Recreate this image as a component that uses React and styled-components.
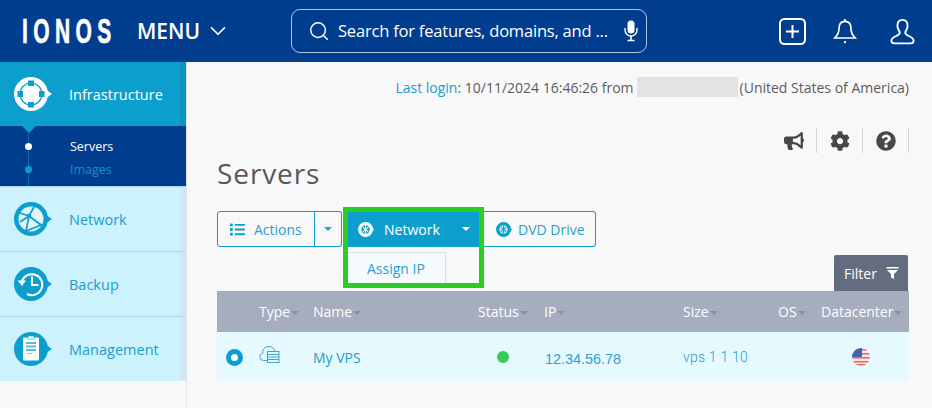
import React from "react";
import styled, { createGlobalStyle } from "styled-components";
import { FaBullhorn, FaCog, FaQuestionCircle, FaList } from "react-icons/fa";
import { Search, ChevronDown } from "lucide-react";

const blue = "#0c9fce";
const navy = "#003d8f";

const Global = createGlobalStyle`
  html, body { margin: 0; padding: 0; background: #f8f8f8; }
  body { font-family: "Open Sans", "Liberation Sans", sans-serif; overflow: hidden; }
  * { box-sizing: border-box; }
`;

const Page = styled.div`
  width: 932px;
  height: 408px;
  overflow: hidden;
  display: flex;
  flex-direction: column;
`;

const Header = styled.header`
  height: 62px;
  flex: none;
  background: ${navy};
  color: #fff;
  display: flex;
  align-items: center;
  padding: 0 17px 0 22px;
`;

const LogoBox = styled.div`
  width: 90px;
  flex: none;
  height: 36px;
`;

const LogoText = styled.span`
  display: inline-block;
  font-family: "Liberation Sans", sans-serif;
  font-weight: 700;
  font-size: 35px;
  line-height: 36px;
  letter-spacing: 9px;
  -webkit-text-stroke: 0.7px #fff;
  transform: scaleX(0.6);
  transform-origin: left center;
  white-space: nowrap;
`;

const MenuLabel = styled.div`
  flex: none;
  display: flex;
  align-items: center;
  gap: 5px;
  margin-left: 25px;
  width: 154px;
  font-size: 21px;
  font-weight: 600;
`;

const SearchBox = styled.div`
  flex: none;
  width: 356px;
  height: 44px;
  margin-top: -1px;
  border: 1px solid rgba(255, 255, 255, 0.7);
  border-radius: 9px;
  display: flex;
  align-items: center;
  padding: 0 8px 0 16px;
  font-size: 16.5px;
  letter-spacing: -0.2px;
`;

const SearchText = styled.span`
  flex: 1;
  margin-left: 8px;
  white-space: nowrap;
`;

const HeaderIcons = styled.div`
  margin-left: auto;
  display: flex;
  align-items: center;
  gap: 27px;
`;

const Body = styled.div`
  flex: 1;
  display: flex;
  min-height: 0;
`;

const Sidebar = styled.nav`
  width: 187px;
  flex: none;
  border-right: 1px solid #dfe5ee;
`;

const NavItem = styled.div`
  height: ${(p) => (p.$active ? 64 : 65)}px;
  display: flex;
  align-items: center;
  gap: 16px;
  padding-left: 14px;
  font-size: 14.5px;
  color: ${(p) => (p.$active ? "#fff" : "#1b9dce")};
  background: ${(p) => (p.$active ? blue : "#ccf3fd")};
  border-right: 6px solid ${(p) => (p.$active ? "#0a93c5" : "#cfe8f6")};
  border-bottom: ${(p) => (p.$active ? "none" : "1px solid #a9d5ea")};
  &:last-child {
    border-bottom: none;
    height: 64px;
  }
`;

const SubNav = styled.div`
  height: 61px;
  background: ${navy};
  position: relative;
  padding: 10px 0 0 70px;
  border-bottom: 1px solid #a9d5ea;
  &::before {
    content: "";
    position: absolute;
    left: 28px;
    top: 0;
    bottom: 0;
    width: 1px;
    background: #0a6ea8;
  }
  &::after {
    content: "";
    position: absolute;
    left: 22px;
    top: 0;
    border: 7px solid transparent;
    border-top-color: ${blue};
    border-bottom: none;
  }
`;

const SubItem = styled.div`
  height: 23px;
  line-height: 21px;
  font-size: 12.5px;
  color: ${(p) => (p.$active ? "#fff" : "#1590cc")};
  position: relative;
  &::before {
    content: "";
    position: absolute;
    left: -45px;
    top: 7px;
    width: 7px;
    height: 7px;
    border-radius: 50%;
    background: ${(p) => (p.$active ? "#fff" : blue)};
  }
`;

const Main = styled.main`
  flex: 1;
  padding: 14px 23px 0 30px;
  color: #555;
`;

const LoginLine = styled.div`
  display: flex;
  justify-content: flex-end;
  align-items: center;
  height: 22px;
  font-size: 14px;
  color: #5c5c5c;
  white-space: pre;
`;

const TextLink = styled.span`
  color: #1b9dce;
`;

const Redacted = styled.span`
  width: 101px;
  height: 20px;
  margin: 0 2px 0 3px;
  background: #e3e3e3;
`;

const ToolIcons = styled.div`
  display: flex;
  justify-content: flex-end;
  margin-top: 30px;
  height: 25px;
`;

const ToolIcon = styled.div`
  width: 46px;
  height: 25px;
  display: flex;
  align-items: center;
  justify-content: center;
  border-right: 1px solid #cfd6e2;
  color: #474747;
  font-size: 20px;
`;

const Title = styled.h1`
  margin: 2px 0 20px;
  font-size: 28px;
  line-height: 36px;
  font-weight: 400;
  letter-spacing: 0.9px;
  color: #585858;
`;

const ButtonRow = styled.div`
  display: flex;
  height: 36px;
`;

const OutlineButton = styled.div`
  height: 36px;
  display: flex;
  align-items: center;
  width: ${(p) => p.$width}px;
  gap: ${(p) => p.$gap || 9}px;
  border: 1px solid ${blue};
  border-radius: ${(p) => p.$radius || "3px"};
  border-left-width: ${(p) => (p.$noLeft ? 0 : 1)}px;
  padding-left: ${(p) => p.$pad || 12}px;
  color: #2a9fd0;
  font-size: 14px;
`;

const Caret = styled.span`
  display: inline-block;
  vertical-align: middle;
  width: 0;
  height: 0;
  border: 4px solid transparent;
  border-top: 4px solid ${(p) => p.$color || "#2a9fd0"};
  border-bottom: none;
  margin-left: ${(p) => p.$left || 0}px;
`;

const NetworkGroup = styled.div`
  position: relative;
  margin-left: 6px;
  width: 131px;
`;

const NetworkButton = styled.div`
  height: 36px;
  display: flex;
  align-items: center;
  padding: 0 9px 0 10px;
  background: ${blue};
  color: #fff;
  font-size: 14px;
  font-weight: 500;
`;

const NetworkLabel = styled.span`
  margin-left: 10px;
  flex: 1;
`;

const Dropdown = styled.div`
  position: absolute;
  left: 0;
  top: 41px;
  width: 98px;
  height: 33px;
  background: #f4f9fc;
  border: 1px solid #d5e1ea;
  border-left: none;
  color: #2a9fd0;
  font-size: 14px;
  line-height: 31px;
  padding-left: 19px;
`;

const Highlight = styled.div`
  position: absolute;
  left: -5px;
  top: -4px;
  width: 141px;
  height: 81px;
  border: 5px solid #2bcc26;
  pointer-events: none;
`;

const FilterRow = styled.div`
  display: flex;
  justify-content: flex-end;
  margin-top: 8px;
  padding-right: 1px;
`;

const FilterButton = styled.div`
  width: 74px;
  height: 36px;
  background: #646c80;
  color: #fff;
  border-radius: 2px 2px 0 0;
  font-size: 14px;
  display: flex;
  align-items: center;
  gap: 9px;
  padding-left: 10px;
`;

const Table = styled.table`
  width: 692px;
  table-layout: fixed;
  border-collapse: collapse;
  th {
    height: 41px;
    background: #a5adbe;
    color: #fff;
    font-weight: 400;
    font-size: 14px;
    text-align: left;
    padding: 0;
    white-space: nowrap;
  }
  td {
    height: 49px;
    background: #e5f9fe;
    color: #1b9dce;
    font-size: 14px;
    padding: 1px 0 0;
  }
`;

const NumberCell = styled.td`
  && {
    font-family: "Liberation Sans", sans-serif;
    font-size: 14.4px;
    color: #2ba3d4;
    padding-top: 4px;
    padding-left: 1px;
  }
`;

const SizeCell = styled.td`
  && {
    font-family: "Roboto", sans-serif;
    font-weight: 300;
    color: #1b9dce;
    letter-spacing: 0.2px;
  }
`;

const Radio = styled.div`
  width: 17px;
  height: 17px;
  margin-left: 9px;
  border-radius: 50%;
  border: 5px solid ${blue};
  background: #fff;
`;

const StatusDot = styled.div`
  width: 12px;
  height: 12px;
  margin-left: 19px;
  border-radius: 50%;
  background: #33cc55;
`;

const FlagWrap = styled.div`
  width: 18px;
  height: 18px;
  margin-left: 31px;
`;

const UserSlot = styled.div`
  display: flex;
  margin-left: 6px;
`;

const Bubble = ({ color = "currentColor", children }) => (
  <svg width="39" height="34" viewBox="0 0 39 34" style={{ flex: "none" }}>
    <circle cx="17" cy="17" r="17" fill={color} />
    <path d="M33 13.5 L38 17 L33 20.5Z" fill={color} />
    {children}
  </svg>
);

const InfraIcon = () => (
  <Bubble color="#fff">
    <circle cx="17" cy="17" r="11" fill="none" stroke={blue} strokeWidth="1.2" />
    <rect x="14" y="3.5" width="6" height="5.5" fill={blue} />
    <rect x="14" y="25" width="6" height="5.5" fill={blue} />
    <rect x="3.5" y="14" width="5.5" height="6" fill={blue} />
    <rect x="25" y="14" width="5.5" height="6" fill={blue} />
  </Bubble>
);

const NetworkIcon = () => (
  <Bubble color={blue}>
    <circle cx="17" cy="17" r="12.5" fill="#dff5fb" />
    <path
      d="M15 14 L6 11 M15 14 L12 29 M15 14 L27 23 M15 14 L20 5 M27 23 L12 29 M6 20 L15 14"
      fill="none"
      stroke={blue}
      strokeWidth="1.7"
    />
    <circle cx="15" cy="14" r="2.2" fill={blue} />
    <circle cx="27" cy="23" r="1.6" fill={blue} />
  </Bubble>
);

const BackupIcon = () => (
  <Bubble color={blue}>
    <path d="M8 14 A10.5 10.5 0 1 1 13 27" fill="none" stroke="#fff" strokeWidth="2" />
    <path d="M3.5 13.5 L12 13.5 L8 19Z" fill="#fff" />
    <path d="M18 9.5 V18 H24.5" fill="none" stroke="#fff" strokeWidth="2" />
  </Bubble>
);

const ManageIcon = () => (
  <Bubble color={blue}>
    <rect x="9" y="5.5" width="16" height="23" rx="1" fill="#fff" />
    <rect x="14" y="4" width="6" height="3" fill="#fff" stroke={blue} strokeWidth="0.6" />
    <path d="M12 11 H22 M12 14.5 H22 M12 18 H22" stroke="#5bb9dc" strokeWidth="1.8" />
    <path d="M12 21.5 H18" stroke="#8ccfe6" strokeWidth="1.2" />
  </Bubble>
);

const SmallDisc = ({ fg, bg }) => (
  <svg width="16" height="15" viewBox="0 0 36 34" style={{ flex: "none" }}>
    <circle cx="17" cy="17" r="17" fill={bg} />
    <path d="M33 13 L36 17 L33 21Z" fill={bg} />
    <circle cx="17" cy="17" r="9.5" fill={fg} />
    <path d="M11 12 L23 22 M23 12 L11 22 M17 8 V26" stroke={bg} strokeWidth="2.4" fill="none" />
  </svg>
);

const MicIcon = () => (
  <svg width="14" height="22" viewBox="0 0 14 22">
    <rect x="3.5" y="0.5" width="7" height="13" rx="3.5" fill="#fff" />
    <path d="M1 8 V10 A6 6 0 0 0 13 10 V8" fill="none" stroke="#fff" strokeWidth="1.4" />
    <path d="M7 16 V20 M3.5 20.5 H10.5" stroke="#fff" strokeWidth="1.6" />
  </svg>
);

const PlusIcon = () => (
  <svg width="27" height="27" viewBox="0 0 27 27" fill="none" stroke="#fff" strokeWidth="2">
    <rect x="1" y="1" width="25" height="25" rx="4.5" />
    <path d="M13.5 7 V20 M7 13.5 H20" />
  </svg>
);

const UserIcon = () => (
  <svg width="25" height="27" viewBox="0 0 27 28" fill="none" stroke="#fff" strokeWidth="2">
    <path d="M13.5 1.5 C9.5 1.5 8 4.5 8 8 C8 11 9.5 13 10.5 14.5 C11 16 10 17 7.5 18.5 C4 20 1.5 21 1.5 24 C1.5 26 3 26.8 5 26.8 H22 C24 26.8 25.5 26 25.5 24 C25.5 21 23 20 19.5 18.5 C17 17 16 16 16.5 14.5 C17.5 13 19 11 19 8 C19 4.5 17.5 1.5 13.5 1.5Z" />
  </svg>
);

const BellIcon = () => (
  <svg width="24" height="27" viewBox="0 0 26 28" fill="none" stroke="#fff" strokeWidth="1.8">
    <path d="M13 3 C8 3 6.5 7 6.5 11 C6.5 16 5 18 2 21 H24 C21 18 19.5 16 19.5 11 C19.5 7 18 3 13 3Z" />
    <path d="M13 0.5 V3" />
    <circle cx="13" cy="25.5" r="1.3" fill="#fff" stroke="none" />
  </svg>
);

const TypeIcon = () => (
  <svg width="21" height="18" viewBox="0 0 21 18" fill="none" stroke="#3aa6d4" strokeWidth="1">
    <path d="M8 14.5 H4.5 A3.8 3.8 0 0 1 3.8 7 A6 6 0 0 1 15 3.5 L16 5" />
    <rect x="8.5" y="5.5" width="11.5" height="11" fill="#e5f9fe" />
    <path d="M8.5 8.5 H20 M8.5 11 H20 M8.5 13.5 H20" />
  </svg>
);

const FunnelIcon = () => (
  <svg width="13" height="12" viewBox="0 0 13 12">
    <path d="M0.5 0 H12.5 V1.5 H0.5Z M1 3 H12 L8 7 V12 L5 10.5 V7Z" fill="#fff" />
  </svg>
);

const FlagIcon = () => (
  <svg width="18" height="18" viewBox="0 0 18 18">
    <defs>
      <clipPath id="flagClip">
        <circle cx="9" cy="9" r="9" />
      </clipPath>
    </defs>
    <g clipPath="url(#flagClip)">
      <rect width="18" height="18" fill="#f6eaea" />
      {[1, 5, 9, 13, 16].map((y) => (
        <rect key={y} x="0" y={y} width="18" height="1.6" fill="#ea6a63" />
      ))}
      <rect width="10" height="9" fill="#3f65ad" />
    </g>
  </svg>
);

const columns = [
  { label: "", width: 42 },
  { label: "Type", width: 54 },
  { label: "Name", width: 165 },
  { label: "Status", width: 66 },
  { label: "IP", width: 139 },
  { label: "Size", width: 95 },
  { label: "OS", width: 43 },
  { label: "Datacenter", width: 88 },
];

const App = () => {
  return (
    <Page>
      <Global />
      <Header>
        <LogoBox>
          <LogoText>IONOS</LogoText>
        </LogoBox>
        <MenuLabel>
          MENU <ChevronDown size={26} strokeWidth={1.6} />
        </MenuLabel>
        <SearchBox>
          <Search size={22} strokeWidth={1.6} />
          <SearchText>Search for features, domains, and ...</SearchText>
          <MicIcon />
        </SearchBox>
        <HeaderIcons>
          <PlusIcon />
          <BellIcon />
          <UserSlot>
            <UserIcon />
          </UserSlot>
        </HeaderIcons>
      </Header>
      <Body>
        <Sidebar>
          <NavItem $active>
            <InfraIcon />
            Infrastructure
          </NavItem>
          <SubNav>
            <SubItem $active>Servers</SubItem>
            <SubItem>Images</SubItem>
          </SubNav>
          <NavItem>
            <NetworkIcon />
            Network
          </NavItem>
          <NavItem>
            <BackupIcon />
            Backup
          </NavItem>
          <NavItem>
            <ManageIcon />
            Management
          </NavItem>
        </Sidebar>
        <Main>
          <LoginLine>
            <TextLink>Last login</TextLink>: 10/11/2024 16:46:26 from
            <Redacted />
            (United States of America)
          </LoginLine>
          <ToolIcons>
            <ToolIcon><FaBullhorn /></ToolIcon>
            <ToolIcon><FaCog /></ToolIcon>
            <ToolIcon><FaQuestionCircle /></ToolIcon>
          </ToolIcons>
          <Title>Servers</Title>
          <ButtonRow>
            <OutlineButton $radius="3px 0 0 3px" $width={98}>
              <FaList size={15} color={blue} />
              Actions
            </OutlineButton>
            <OutlineButton $radius="0 3px 3px 0" $noLeft $pad={8} $width={27}>
              <Caret $left={1} />
            </OutlineButton>
            <NetworkGroup>
              <NetworkButton>
                <SmallDisc fg={blue} bg="#fff" />
                <NetworkLabel>Network</NetworkLabel>
                <Caret $color="#fff" />
              </NetworkButton>
              <Dropdown>Assign IP</Dropdown>
              <Highlight />
            </NetworkGroup>
            <OutlineButton $radius="0 3px 3px 0" $gap={6} $pad={17} $noLeft $width={117}>
              <SmallDisc fg="#cdeaf7" bg={blue} />
              DVD Drive
            </OutlineButton>
          </ButtonRow>
          <FilterRow>
            <FilterButton>
              Filter <FunnelIcon />
            </FilterButton>
          </FilterRow>
          <Table>
            <colgroup>
              {columns.map((c) => (
                <col key={c.width + c.label} style={{ width: c.width }} />
              ))}
            </colgroup>
            <thead>
              <tr>
                {columns.map((c) => (
                  <th key={c.label}>
                    {c.label}
                    {c.label && <Caret $color="#8c909c" $left={1} />}
                  </th>
                ))}
              </tr>
            </thead>
            <tbody>
              <tr>
                <td><Radio /></td>
                <td><TypeIcon /></td>
                <td>My VPS</td>
                <td><StatusDot /></td>
                <NumberCell>12.34.56.78</NumberCell>
                <SizeCell>vps 1 1 10</SizeCell>
                <td />
                <td><FlagWrap><FlagIcon /></FlagWrap></td>
              </tr>
            </tbody>
          </Table>
        </Main>
      </Body>
    </Page>
  );
};

export default App;
